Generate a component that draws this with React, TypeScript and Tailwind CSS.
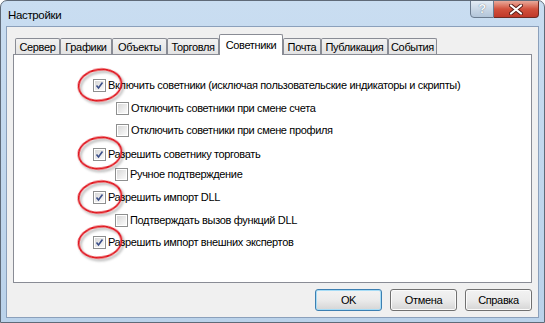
import React from 'react';

const tabs = [
  { label: 'Сервер', w: 'w-[45px]' },
  { label: 'Графики', w: 'w-[52px]' },
  { label: 'Объекты', w: 'w-[55px]' },
  { label: 'Торговля', w: 'w-[52px]' },
  { label: 'Советники', w: 'w-[64px]', active: true },
  { label: 'Почта', w: 'w-[38px]' },
  { label: 'Публикация', w: 'w-[67px]' },
  { label: 'События', w: 'w-[49px]' },
];

const options = [
  { label: 'Включить советники (исключая пользовательские индикаторы и скрипты)', checked: true, indent: 'pl-[79px]', mt: 'mt-0' },
  { label: 'Отключить советники при смене счета', indent: 'pl-[102px]', mt: 'mt-px' },
  { label: 'Отключить советники при смене профиля', indent: 'pl-[102px]', mt: 'mt-0' },
  { label: 'Разрешить советнику торговать', checked: true, indent: 'pl-[79px]', mt: 'mt-[2px]' },
  { label: 'Ручное подтверждение', indent: 'pl-[101px]', mt: '-mt-[2px]' },
  { label: 'Разрешить импорт DLL', checked: true, indent: 'pl-[79px]', mt: 'mt-px' },
  { label: 'Подтверждать вызов функций DLL', indent: 'pl-[101px]', mt: 'mt-px' },
  { label: 'Разрешить импорт внешних экспертов', checked: true, indent: 'pl-[79px]', mt: 'mt-0' },
];

const Checkbox = ({ checked }: { checked?: boolean }) => (
  <span className="w-[13px] h-[13px] border border-[#8e8f8f] bg-white p-px shrink-0 flex">
    <span className="flex-1 bg-gradient-to-br from-[#d8d8d8] to-[#fbfbfb] flex items-center justify-center">
      {checked && (
        <svg width="9" height="9" viewBox="0 0 9 9">
          <path d="M1.5 4.5 L3.5 7 L7.5 1.5" fill="none" stroke="#3b4f8a" strokeWidth="1.6" />
        </svg>
      )}
    </span>
  </span>
);

const Button = ({ label, focused }: { label: string; focused?: boolean }) => (
  <button
    className={`w-[67px] h-[22px] rounded-[3px] border text-black bg-gradient-to-b from-[#f2f2f2] via-[#ebebeb] to-[#d5d5d5] ${
      focused ? 'border-[#3c7fb1] shadow-[inset_0_0_0_1px_#a6dcf6]' : 'border-[#707070] shadow-[inset_0_0_0_1px_#fbfbfb]'
    }`}
  >
    {label}
  </button>
);

export default function App() {
  return (
    <div className="relative w-[545px] h-[323px] flex flex-col bg-gradient-to-b from-[#c9ddf1] to-[#bad2ea] border border-[#5f6a78] rounded-t-[7px] overflow-hidden font-['Liberation_Sans',Arial,sans-serif] text-[11px] tracking-[-0.35px] text-black">
      <div className="h-[25px] flex items-start justify-between shrink-0">
        <span className="pl-[7px] pt-[7px] leading-[14px] text-[11.5px]">Настройки</span>
        <div className="flex mr-[5px] -mt-px">
          <div className="w-[24px] h-[18px] rounded-bl-[4px] border border-[#6b7b8f] bg-gradient-to-b from-[#e3ecf5] via-[#c9d7e6] to-[#b3c5d9] flex items-center justify-center text-[13px] font-bold text-[#f4f7fa] [text-shadow:0_0_1px_#4a5566]">
            ?
          </div>
          <div className="w-[45px] h-[18px] rounded-br-[4px] border border-l-0 border-[#6e2a22] bg-gradient-to-b from-[#e8a99b] via-[#d2513d] to-[#c0392a] flex items-center justify-center">
            <svg width="14" height="11" viewBox="0 0 14 11">
              <path d="M2 1.5 L12 9.5 M12 1.5 L2 9.5" stroke="#5a1e18" strokeWidth="4" strokeLinecap="round" />
              <path d="M2 1.5 L12 9.5 M12 1.5 L2 9.5" stroke="#ffffff" strokeWidth="2.2" strokeLinecap="round" />
            </svg>
          </div>
        </div>
      </div>

      <div className="flex-1 mx-[5px] mb-[4px] border border-[#8ba0bb] bg-[#f0f0f0] flex flex-col">
        <div className="flex items-end pt-[6px] pl-[8px] h-[27px] shrink-0">
          {tabs.map((t) =>
            t.active ? (
              <div
                key={t.label}
                className={`${t.w} h-[21px] -mb-px relative z-10 bg-white border border-b-0 border-[#898c95] rounded-t-[2px] flex items-start justify-center pt-[3px] leading-[14px]`}
              >
                {t.label}
              </div>
            ) : (
              <div
                key={t.label}
                className={`${t.w} h-[16px] bg-gradient-to-b from-[#f2f2f2] to-[#e3e3e3] border border-b-0 border-[#898c95] rounded-t-[2px] flex items-center justify-center leading-[14px]`}
              >
                {t.label}
              </div>
            )
          )}
        </div>
        <div className="ml-[6px] mr-[6px] h-[229px] bg-white border border-[#898c95] pt-[19px] flex flex-col">
          {options.map((o) => (
            <div key={o.label} className={`h-[22px] flex items-center gap-[2px] ${o.indent} ${o.mt}`}>
              <Checkbox checked={o.checked} />
              <span className="leading-[14px] whitespace-nowrap">{o.label}</span>
            </div>
          ))}
        </div>
        <div className="flex justify-end gap-[8px] mt-[6px] mr-[6px]">
          <Button label="OK" focused />
          <Button label="Отмена" />
          <Button label="Справка" />
        </div>
      </div>

      <svg className="absolute inset-0 pointer-events-none" width="545" height="323" viewBox="0 0 545 323">
        <defs>
          <filter id="sh" x="-30%" y="-30%" width="160%" height="160%">
            <feDropShadow dx="1.5" dy="2.5" stdDeviation="1.2" floodColor="#000" floodOpacity="0.35" />
          </filter>
        </defs>
        {[84, 152, 196, 241].map((cy) => (
          <ellipse
            key={cy}
            cx="99"
            cy={cy}
            rx="21.5"
            ry="15.5"
            transform={`rotate(-8 99 ${cy})`}
            fill="none"
            stroke="#e0121b"
            strokeWidth="1.8"
            filter="url(#sh)"
          />
        ))}
      </svg>
    </div>
  );
}
